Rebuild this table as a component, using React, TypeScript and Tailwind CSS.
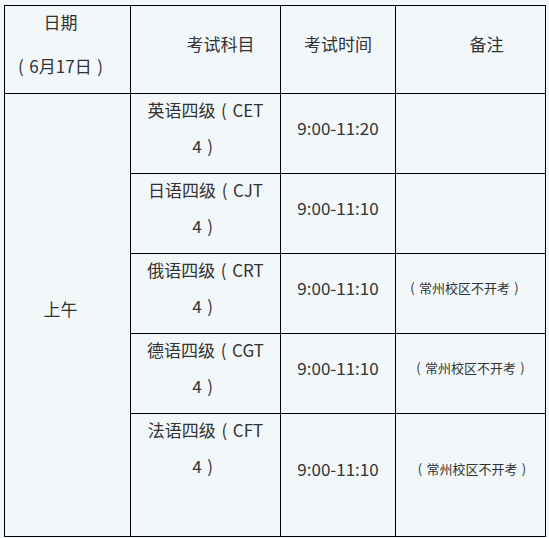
import React from "react";

const font = {
  fontFamily: '"Noto Sans CJK SC", "Noto Sans", sans-serif',
};

function L() {
  return <span className="inline-block w-[1em] text-center">(</span>;
}
function R() {
  return <span className="inline-block w-[1em] text-center">)</span>;
}

function Subject({ name, code }: { name: string; code: string }) {
  return (
    <div className="bg-[#f2f7fa] flex flex-col items-center text-[17px] leading-[36px]">
      <span className="-mt-[2px] whitespace-nowrap">
        {name}
        <L />
        {code}
      </span>
      <span className="whitespace-nowrap">
        4<R />
      </span>
    </div>
  );
}

function Time({ t }: { t: string }) {
  return (
    <div className="bg-[#f2f7fa] flex items-center justify-center pb-3 text-[17px]">
      {t}
    </div>
  );
}

function Remark({ show, cls }: { show?: boolean; cls?: string }) {
  return (
    <div className={`bg-[#f2f7fa] flex items-center justify-center pb-3 text-[13px] whitespace-nowrap ${cls ?? ""}`}>
      {show ? (
        <span>
          <L />
          常州校区不开考
          <R />
        </span>
      ) : null}
    </div>
  );
}

export default function App() {
  return (
    <div className="w-[549px] h-[538px] bg-[#f2f7fa] overflow-hidden text-[#333333]" style={font}>
      <div className="pl-1 pt-[5px]">
        <div className="grid grid-cols-[125px_149px_114px_149px] grid-rows-[87px_79px_79px_79px_79px_122px] gap-px bg-black p-px w-[542px]">
          <div className="bg-[#f2f7fa] flex flex-col items-center pr-[14px] text-[17px] leading-[35px] gap-[9px]">
            <span className="-mt-[2px]">日期</span>
            <span className="whitespace-nowrap">
              <L />6月17日<R />
            </span>
          </div>
          <div className="bg-[#f2f7fa] flex items-center justify-center pb-3 pl-[30px] text-[17px]">考试科目</div>
          <div className="bg-[#f2f7fa] flex items-center justify-center pb-3 text-[17px]">考试时间</div>
          <div className="bg-[#f2f7fa] flex items-center justify-center pb-3 pl-8 text-[17px]">备注</div>

          <div className="row-span-5 bg-[#f2f7fa] flex items-center justify-center pr-[14px] pb-3 text-[17px]">上午</div>

          <Subject name="英语四级" code="CET" />
          <Time t="9:00-11:20" />
          <Remark />

          <Subject name="日语四级" code="CJT" />
          <Time t="9:00-11:10" />
          <Remark />

          <Subject name="俄语四级" code="CRT" />
          <Time t="9:00-11:10" />
          <Remark show cls="pr-3" />

          <Subject name="德语四级" code="CGT" />
          <Time t="9:00-11:10" />
          <Remark show />

          <Subject name="法语四级" code="CFT" />
          <Time t="9:00-11:10" />
          <Remark show cls="pl-[3px]" />
        </div>
      </div>
    </div>
  );
}
